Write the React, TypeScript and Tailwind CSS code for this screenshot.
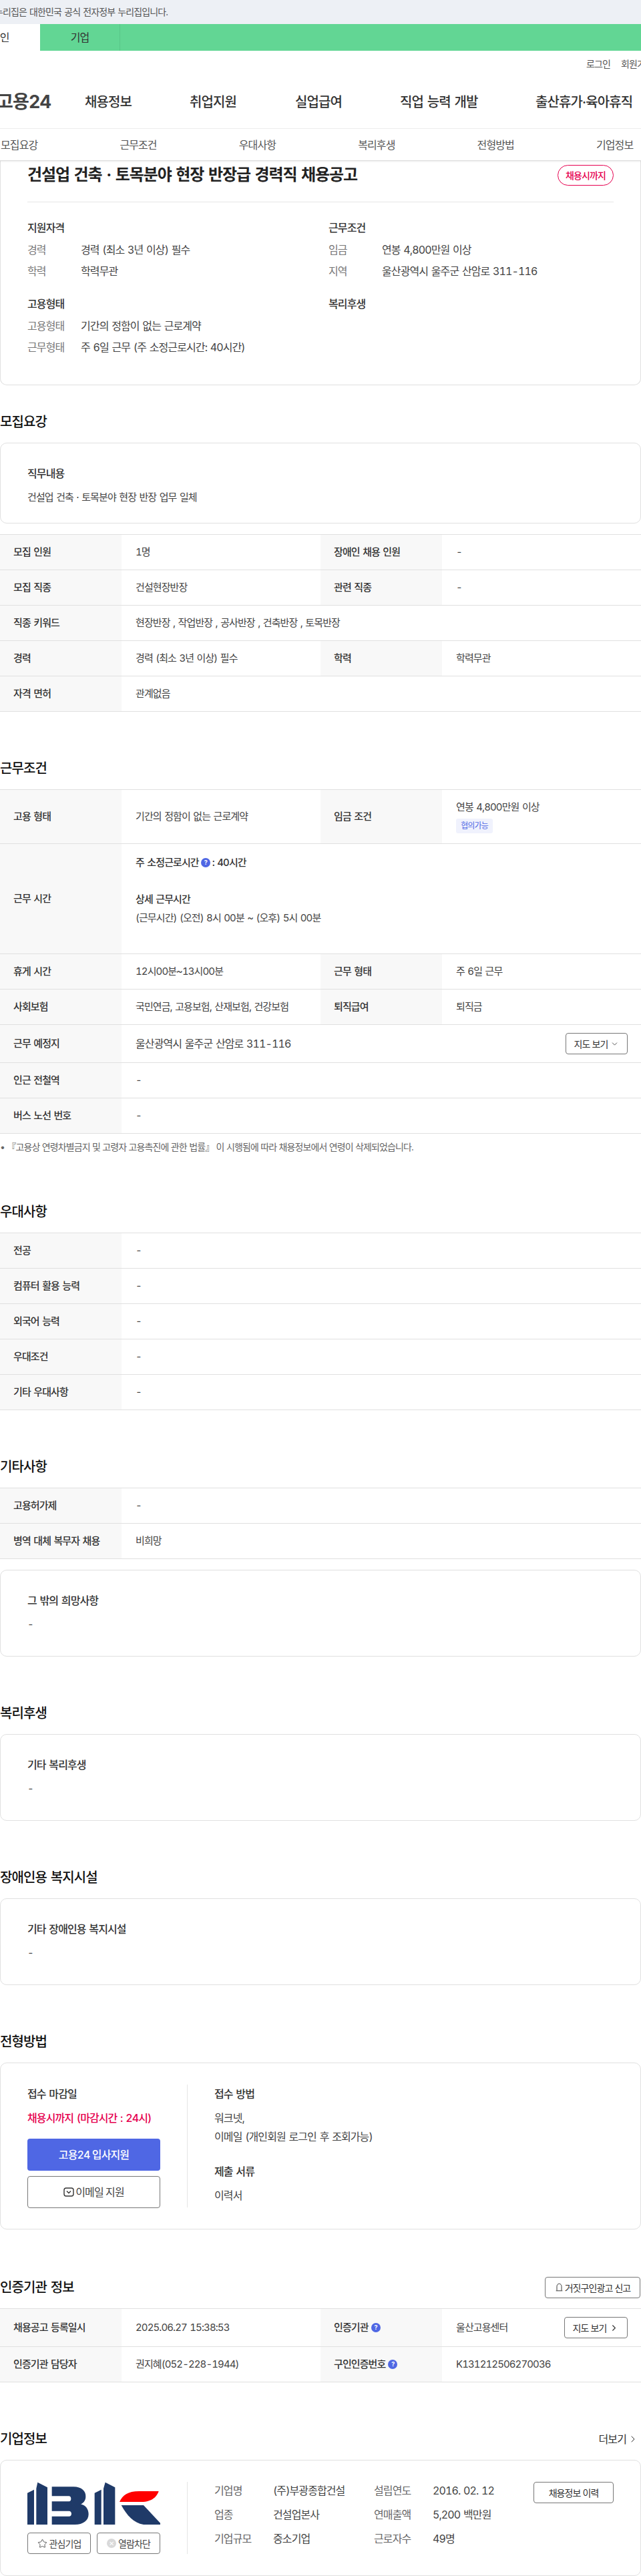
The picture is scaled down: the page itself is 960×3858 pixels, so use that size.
import type { ReactNode } from "react";
import { ChevronDown, ChevronRight, Star } from "lucide-react";

const nav = [
  { label: "채용정보", width: "w-[157px]" },
  { label: "취업지원", width: "w-[158px]" },
  { label: "실업급여", width: "w-[157px]" },
  { label: "직업 능력 개발", width: "w-[203px]" },
  { label: "출산휴가·육아휴직", width: "w-[158px]" },
];

const subNav = ["모집요강", "근무조건", "우대사항", "복리후생", "전형방법", "기업정보"];

function Heading({ children, className = "" }: { children: ReactNode; className?: string }) {
  return <h2 className={`h-[30px] leading-[30px] text-[20px] font-medium text-[#111] ${className}`}>{children}</h2>;
}

function Label({ children }: { children: ReactNode }) {
  return (
    <div className="flex w-[182px] flex-none items-center gap-[4px] bg-[#f8f8f8] pl-5 text-[15px] font-medium text-[#333]">
      {children}
    </div>
  );
}

function Value({ children, wide = false }: { children: ReactNode; wide?: boolean }) {
  return (
    <div className={`flex items-center pl-[21px] text-[15px] text-[#444] ${wide ? "flex-1" : "w-[298px] flex-none"}`}>
      {children}
    </div>
  );
}

function Row({ height = "h-[53px]", children }: { height?: string; children: ReactNode }) {
  return <div className={`flex border-b border-[#e0e0e0] ${height}`}>{children}</div>;
}

function Table({ children }: { children: ReactNode }) {
  return <div className="border-t border-[#e0e0e0]">{children}</div>;
}

function Pair({ label, value }: { label: string; value: string }) {
  return (
    <Row>
      <Label>{label}</Label>
      <Value wide>{value}</Value>
    </Row>
  );
}

function Quad({ a, b, c, d }: { a: string; b: string; c: string; d: string }) {
  return (
    <Row>
      <Label>{a}</Label>
      <Value>{b}</Value>
      <Label>{c}</Label>
      <Value>{d}</Value>
    </Row>
  );
}

function TextCard({ title, body, height = "h-[130px]" }: { title: string; body: string; height?: string }) {
  return (
    <div className={`rounded-[10px] border border-[#e0e0e0] px-[40px] pt-[33px] ${height}`}>
      <div className="h-[24px] text-[16px] font-medium leading-[24px] text-[#333]">{title}</div>
      <div className="mt-[12px] h-[24px] text-[15px] leading-[24px] text-[#444]">{body}</div>
    </div>
  );
}

function Help() {
  return (
    <span className="inline-flex h-[14px] w-[14px] flex-none items-center justify-center rounded-full bg-[#4f67e4] text-[9px] font-bold text-white">
      ?
    </span>
  );
}

function SummaryRow({ label, value }: { label: string; value: string }) {
  return (
    <div className="mt-[10px] flex h-[22px] items-center text-[16px] leading-[22px]">
      <span className="w-[80px] flex-none text-[#777]">{label}</span>
      <span className="text-[#444]">{value}</span>
    </div>
  );
}

function SmallHead({ children }: { children: ReactNode }) {
  return <div className="h-[24px] text-[16px] font-medium leading-[24px] text-[#333]">{children}</div>;
}

function MapButton({ width, children }: { width: string; children: ReactNode }) {
  return (
    <button className={`flex h-[32px] flex-none items-center justify-center gap-[4px] rounded-[4px] border border-[#777] bg-white text-[14px] text-[#333] ${width}`}>
      {children}
    </button>
  );
}

function Logo() {
  return (
    <svg viewBox="18 20 597 192" className="block h-[64px] w-[199px]">
      <g fill="#1f3a68">
        <path d="M18 70L48 55V212H18Z" />
        <path d="M58 212V50L64 22L108 45V212Z" />
        <path d="M128 42H225C262 42 282 62 280 88C279 104 270 115 258 120C280 126 293 142 293 165C293 195 268 212 232 212H128V175H205C212 175 216 170 216 163C216 156 212 151 205 151H128V108H205C212 108 214 102 214 96C214 88 210 84 204 84H128Z" />
        <path d="M320 70L350 55V212H320Z" />
        <path d="M360 212V50L368 22L412 45V212Z" />
        <path d="M440 125H540L615 205V212H540C495 205 465 170 440 125Z" />
      </g>
      <path d="M432 110C445 80 470 62 520 62H608C600 85 580 110 530 110Z" fill="#ff0000" />
    </svg>
  );
}

export default function App() {
  return (
    <div className="w-[960px] overflow-hidden bg-white font-['Inter','Noto_Sans_CJK_KR','Liberation_Sans',sans-serif] tracking-[-0.9px] tabular-nums [word-spacing:1.3px] text-[#222]">
      <div className="h-[36px] whitespace-nowrap bg-[#edf0f5] text-[14px] leading-[36px] text-[#555]">
        <span className="-ml-[8px] block">누리집은 대한민국 공식 전자정부 누리집입니다.</span>
      </div>
      <div className="flex h-[40px] bg-[#62d694] text-[16px] leading-[40px] text-[#333]">
        <div className="h-full w-[60px] flex-none overflow-hidden whitespace-nowrap bg-white">
          <span className="-ml-[14px] block">개인</span>
        </div>
        <div className="h-full w-[120px] flex-none border-r border-[#58c788] text-center">기업</div>
      </div>

      <div className="flex h-[38px] items-center gap-4 whitespace-nowrap pl-[878px] text-[14px] text-[#555]">
        <span>로그인</span>
        <span>회원가입</span>
      </div>
      <div className="flex h-[79px] items-center whitespace-nowrap border-b border-[#eeeeee] text-[20px] font-medium text-[#333]">
        <div className="w-[127px] flex-none">
          <span className="-ml-[5px] block text-[27px] font-bold text-[#444]">고용24</span>
        </div>
        {nav.map((item) => (
          <div key={item.label} className={`flex-none ${item.width}`}>
            {item.label}
          </div>
        ))}
      </div>
      <div className="relative z-10 flex h-[48px] items-center border-b border-[#dddddd] pl-[1px] text-[16px] text-[#555] shadow-[0_1px_2px_rgba(0,0,0,0.08)]">
        {subNav.map((item) => (
          <div key={item} className="w-[178.4px] flex-none">
            {item}
          </div>
        ))}
      </div>

      <div className="h-[336px] rounded-b-[10px] border-x border-b border-[#e0e0e0] px-[40px]">
        <div className="flex h-[62px] items-start justify-between border-b border-[#e5e5e5] pt-[6px]">
          <h1 className="text-[24px] font-bold leading-[30px] tracking-[-1.1px] text-[#222]">건설업 건축 · 토목분야 현장 반장급 경력직 채용공고</h1>
          <span className="mr-0 flex h-[31px] w-[84px] items-center justify-center rounded-full border border-[#e6004f] text-[14px] font-medium text-[#e6004f]">
            채용시까지
          </span>
        </div>
        <div className="mt-[26px] grid grid-cols-[451px_1fr] gap-y-[26px]">
          <div>
            <SmallHead>지원자격</SmallHead>
            <SummaryRow label="경력" value="경력 (최소 3년 이상) 필수" />
            <SummaryRow label="학력" value="학력무관" />
          </div>
          <div>
            <SmallHead>근무조건</SmallHead>
            <SummaryRow label="임금" value="연봉 4,800만원 이상" />
            <SummaryRow label="지역" value="울산광역시 울주군 산암로 311-116" />
          </div>
          <div>
            <SmallHead>고용형태</SmallHead>
            <SummaryRow label="고용형태" value="기간의 정함이 없는 근로계약" />
            <SummaryRow label="근무형태" value="주 6일 근무 (주 소정근로시간: 40시간)" />
          </div>
          <div>
            <SmallHead>복리후생</SmallHead>
          </div>
        </div>
      </div>

      <section className="mt-[40px]">
        <Heading>모집요강</Heading>
        <div className="mt-[16px]">
          <TextCard title="직무내용" body="건설업 건축 · 토목분야 현장 반장 업무 일체" height="h-[121px]" />
        </div>
        <div className="mt-[16px]">
          <Table>
            <Quad a="모집 인원" b="1명" c="장애인 채용 인원" d="-" />
            <Quad a="모집 직종" b="건설현장반장" c="관련 직종" d="-" />
            <Pair label="직종 키워드" value="현장반장 , 작업반장 , 공사반장 , 건축반장 , 토목반장" />
            <Quad a="경력" b="경력 (최소 3년 이상) 필수" c="학력" d="학력무관" />
            <Pair label="자격 면허" value="관계없음" />
          </Table>
        </div>
      </section>

      <section className="mt-[70px]">
        <Heading>근무조건</Heading>
        <div className="mt-[16px]">
          <Table>
            <Row height="h-[81px]">
              <Label>고용 형태</Label>
              <Value>기간의 정함이 없는 근로계약</Value>
              <Label>임금 조건</Label>
              <div className="flex w-[298px] flex-none flex-col items-start justify-center pl-[21px] text-[15px] text-[#444]">
                <span className="leading-[22px]">연봉 4,800만원 이상</span>
                <span className="mt-[6px] flex h-[22px] w-[55px] items-center justify-center rounded-[3px] bg-[#f0f2fd] text-[12px] text-[#4f67e4]">
                  협의가능
                </span>
              </div>
            </Row>
            <Row height="h-[165px]">
              <Label>근무 시간</Label>
              <div className="flex flex-1 flex-col pl-[21px] pt-[16px] text-[15px] text-[#444]">
                <div className="flex h-[24px] items-center gap-[3px] font-medium text-[#333]">
                  주 소정근로시간 <Help />: 40시간
                </div>
                <div className="mt-[31px] h-[24px] font-medium leading-[24px] text-[#333]">상세 근무시간</div>
                <div className="mt-[4px] h-[24px] leading-[24px]">(근무시간) (오전) 8시 00분 ~ (오후) 5시 00분</div>
              </div>
            </Row>
            <Quad a="휴게 시간" b="12시00분~13시00분" c="근무 형태" d="주 6일 근무" />
            <Quad a="사회보험" b="국민연금, 고용보험, 산재보험, 건강보험" c="퇴직급여" d="퇴직금" />
            <Row height="h-[57px]">
              <Label>근무 예정지</Label>
              <div className="flex flex-1 items-center justify-between pl-[21px] pr-[20px] text-[16px] text-[#444]">
                <span>울산광역시 울주군 산암로 311-116</span>
                <MapButton width="w-[93px]">
                  지도 보기 <ChevronDown size={13} strokeWidth={1.5} />
                </MapButton>
              </div>
            </Row>
            <Pair label="인근 전철역" value="-" />
            <Pair label="버스 노선 번호" value="-" />
          </Table>
        </div>
        <p className="mt-[10px] h-[20px] whitespace-nowrap text-[14px] leading-[20px] [word-spacing:0.5px] text-[#666]">
          • 『고용상 연령차별금지 및 고령자 고용촉진에 관한 법률』 이 시행됨에 따라 채용정보에서 연령이 삭제되었습니다.
        </p>
      </section>

      <section className="mt-[72px]">
        <Heading>우대사항</Heading>
        <div className="mt-[16px]">
          <Table>
            <Pair label="전공" value="-" />
            <Pair label="컴퓨터 활용 능력" value="-" />
            <Pair label="외국어 능력" value="-" />
            <Pair label="우대조건" value="-" />
            <Pair label="기타 우대사항" value="-" />
          </Table>
        </div>
      </section>

      <section className="mt-[70px]">
        <Heading>기타사항</Heading>
        <div className="mt-[16px]">
          <Table>
            <Pair label="고용허가제" value="-" />
            <Pair label="병역 대체 복무자 채용" value="비희망" />
          </Table>
        </div>
        <div className="mt-[16px]">
          <TextCard title="그 밖의 희망사항" body="-" />
        </div>
      </section>

      <section className="mt-[70px]">
        <Heading>복리후생</Heading>
        <div className="mt-[16px]">
          <TextCard title="기타 복리후생" body="-" />
        </div>
      </section>

      <section className="mt-[70px]">
        <Heading>장애인용 복지시설</Heading>
        <div className="mt-[16px]">
          <TextCard title="기타 장애인용 복지시설" body="-" />
        </div>
      </section>

      <section className="mt-[70px]">
        <Heading>전형방법</Heading>
        <div className="mt-[16px] flex h-[250px] rounded-[10px] border border-[#e0e0e0] px-[40px] pt-[32px]">
          <div className="w-[199px] flex-none pt-[2px]">
            <SmallHead>접수 마감일</SmallHead>
            <div className="mt-[12px] h-[24px] whitespace-nowrap text-[16px] font-medium leading-[24px] text-[#e6004f]">
              채용시까지 (마감시간 : 24시)
            </div>
            <button className="mt-[19px] block h-[48px] w-full rounded-[4px] bg-[#4f67e4] text-[16px] font-medium text-white">
              고용24 입사지원
            </button>
            <button className="mt-[8px] flex h-[48px] w-full items-center justify-center gap-[2px] rounded-[4px] border border-[#777] text-[16px] text-[#444]">
              <svg viewBox="0 0 16 16" className="h-[16px] w-[16px]" fill="none" stroke="#333" strokeWidth="1.4">
                <rect x="1" y="2" width="14" height="12" rx="3" />
                <path d="M5 6.5L8 9.5L11 6.5" />
              </svg>
              이메일 지원
            </button>
          </div>
          <div className="ml-[40px] h-[184px] border-l border-[#e5e5e5] pl-[40px] pt-[2px] text-[16px] text-[#444]">
            <SmallHead>접수 방법</SmallHead>
            <div className="mt-[12px] h-[24px] leading-[24px]">워크넷,</div>
            <div className="mt-[4px] h-[24px] leading-[24px]">이메일 (개인회원 로그인 후 조회가능)</div>
            <div className="mt-[28px]">
              <SmallHead>제출 서류</SmallHead>
            </div>
            <div className="mt-[12px] h-[24px] leading-[24px]">이력서</div>
          </div>
        </div>
      </section>

      <section className="mt-[71px]">
        <div className="flex h-[32px] items-center justify-between">
          <Heading>인증기관 정보</Heading>
          <button className="mr-[1px] flex h-[32px] w-[143px] items-center justify-center gap-[2px] rounded-[4px] border border-[#777] text-[14px] text-[#333]">
            <svg viewBox="0 0 14 16" className="h-[14px] w-[13px]" fill="none" stroke="#333" strokeWidth="1.1">
              <path d="M3 13V6C3 3.5 4.8 1.5 7 1.5C9.2 1.5 11 3.5 11 6V13" />
              <path d="M1.5 13.5H12.5" />
            </svg>
            거짓구인광고 신고
          </button>
        </div>
        <div className="mt-[15px]">
          <Table>
            <Row height="h-[57px]">
              <Label>채용공고 등록일시</Label>
              <Value>2025.06.27 15:38:53</Value>
              <Label>
                인증기관 <Help />
              </Label>
              <div className="flex flex-1 items-center justify-between pl-[21px] pr-[20px] text-[15px] text-[#444]">
                <span>울산고용센터</span>
                <MapButton width="w-[95px]">
                  지도 보기 <ChevronRight size={15} strokeWidth={1.8} />
                </MapButton>
              </div>
            </Row>
            <Row>
              <Label>인증기관 담당자</Label>
              <Value>권지혜(052-228-1944)</Value>
              <Label>
                구인인증번호 <Help />
              </Label>
              <Value>K131212506270036</Value>
            </Row>
          </Table>
        </div>
      </section>

      <section className="mt-[70px]">
        <div className="flex h-[30px] items-center justify-between">
          <Heading>기업정보</Heading>
          <span className="mr-[4px] flex items-center gap-[2px] text-[16px] text-[#333]">
            더보기 <ChevronRight size={16} strokeWidth={1.5} />
          </span>
        </div>
        <div className="mt-[16px] flex h-[174px] rounded-[10px] border border-[#e0e0e0] pl-[40px] pr-[40px] pt-[32px]">
          <div className="w-[199px] flex-none">
            <Logo />
            <div className="mt-[12px] flex justify-between">
              <button className="flex h-[32px] w-[95px] items-center justify-center gap-[3px] rounded-[4px] border border-[#777] text-[14px] text-[#444]">
                <Star size={15} strokeWidth={1.4} /> 관심기업
              </button>
              <button className="flex h-[32px] w-[95px] items-center justify-center gap-[3px] rounded-[4px] border border-[#777] text-[14px] text-[#444]">
                <span className="flex h-[14px] w-[14px] items-center justify-center rounded-full bg-[#d9d9d9] text-[10px] leading-none text-white">✕</span>
                열람차단
              </button>
            </div>
          </div>
          <div className="ml-[40px] h-[108px] w-[519px] flex-none border-l border-[#e5e5e5] pl-[40px]">
            <div className="grid grid-cols-[88px_151px_88px_1fr] grid-rows-[24px_24px_24px] gap-y-[12px] pt-[1px] text-[16px] leading-[24px] text-[#444]">
              <span className="text-[#666]">기업명</span>
              <span>(주)부광종합건설</span>
              <span className="text-[#666]">설립연도</span>
              <span>2016. 02. 12</span>
              <span className="text-[#666]">업종</span>
              <span>건설업본사</span>
              <span className="text-[#666]">연매출액</span>
              <span>5,200 백만원</span>
              <span className="text-[#666]">기업규모</span>
              <span>중소기업</span>
              <span className="text-[#666]">근로자수</span>
              <span>49명</span>
            </div>
          </div>
          <button className="h-[32px] w-[120px] flex-none rounded-[4px] border border-[#777] text-[14px] text-[#333]">채용정보 이력</button>
        </div>
      </section>
    </div>
  );
}
